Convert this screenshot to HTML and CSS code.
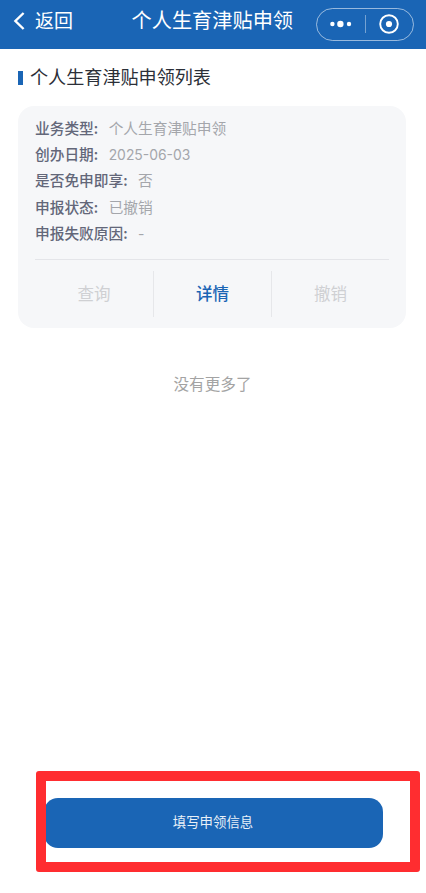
FILE: index.html
```html
<!DOCTYPE html>
<html lang="zh-CN">
<head>
<meta charset="utf-8">
<title>个人生育津贴申领</title>
<link rel="stylesheet" href="styles.css">
</head>
<body>
<div class="page">
  <header class="nav">
    <div class="nav-back">
      <svg class="chevron" viewBox="0 0 12 18" width="12" height="18"><path d="M10.6 1 L2.4 9 L10.6 17" fill="none" stroke="#fff" stroke-width="2.4"/></svg>
      <span>返回</span>
    </div>
    <div class="nav-title">个人生育津贴申领</div>
    <div class="capsule">
      <svg class="dots" viewBox="0 0 22 10" width="22" height="10"><circle cx="2.4" cy="5" r="2.2" fill="#fff"/><circle cx="10.4" cy="5" r="3.2" fill="#fff"/><circle cx="19" cy="5" r="2.2" fill="#fff"/></svg>
      <span class="capsule-sep"></span>
      <svg class="target" viewBox="0 0 20 20" width="20" height="20"><circle cx="10" cy="10" r="8.8" fill="none" stroke="#fff" stroke-width="1.9"/><circle cx="10" cy="10" r="3.1" fill="#fff"/></svg>
    </div>
  </header>

  <main class="content">
    <h1 class="section-title">个人生育津贴申领列表</h1>
    <section class="card">
      <dl class="fields">
        <div class="field"><dt>业务类型:</dt><dd>个人生育津贴申领</dd></div>
        <div class="field"><dt>创办日期:</dt><dd class="num">2025-06-03</dd></div>
        <div class="field"><dt>是否免申即享:</dt><dd>否</dd></div>
        <div class="field"><dt>申报状态:</dt><dd>已撤销</dd></div>
        <div class="field"><dt>申报失败原因:</dt><dd class="num">-</dd></div>
      </dl>
      <div class="actions">
        <div class="action disabled">查询</div>
        <div class="action primary">详情</div>
        <div class="action disabled">撤销</div>
      </div>
    </section>
    <p class="no-more">没有更多了</p>
  </main>

  <div class="footer">
    <button class="submit">填写申领信息</button>
  </div>
  <div class="annotation"></div>
</div>
</body>
</html>
```

FILE: styles.css
```css
* { box-sizing: border-box; }
html, body { margin: 0; padding: 0; background: #fff; }
body { font-family: "Noto Sans CJK SC", "Noto Sans", sans-serif; }

.page {
  position: relative;
  width: 426px;
  height: 893px;
  display: flex;
  flex-direction: column;
  overflow: hidden;
}

.nav {
  position: relative;
  height: 49px;
  flex: none;
  background: #1a65b5;
  color: #fff;
  display: flex;
  align-items: center;
  justify-content: space-between;
  padding: 0 12px 8px 13px;
}
.nav-back {
  display: flex;
  align-items: center;
  gap: 10px;
  font-size: 19px;
  line-height: 26px;
}
.nav-back span { margin-top: -2px; }
.chevron { display: block; }
.nav-title {
  position: absolute;
  left: 131.5px;
  top: 5px;
  font-size: 20.2px;
  line-height: 29px;
  white-space: nowrap;
}
.capsule {
  width: 98px;
  height: 33px;
  margin-top: 7px;
  border: 1px solid rgba(255,255,255,.55);
  border-radius: 17px;
  display: flex;
  align-items: center;
  gap: 13px;
  padding: 0 0 0 13px;
}
.capsule-sep {
  width: 1px;
  height: 18px;
  background: rgba(255,255,255,.4);
}

.content {
  flex: 1;
  padding: 0 20px 0 18px;
  display: flex;
  flex-direction: column;
}
.section-title {
  margin: 15px 0 17px;
  padding-left: 12px;
  position: relative;
  font-size: 18.1px;
  line-height: 25px;
  font-weight: 400;
  color: #2b2f38;
}
.section-title::before {
  content: "";
  position: absolute;
  left: 0;
  top: 7px;
  width: 5px;
  height: 14px;
  background: #1a65b5;
}

.card {
  height: 222px;
  background: #f6f7f9;
  border-radius: 16px;
  padding: 9px 17px 0;
  display: flex;
  flex-direction: column;
}
.fields { margin: 0; height: 145px; border-bottom: 1px solid #e4e5e9; }
.field {
  display: flex;
  height: 26.2px;
  align-items: baseline;
  font-size: 14.7px;
  line-height: 26.2px;
  white-space: nowrap;
}
.field dt { color: #636779; font-weight: 500; padding-right: 10.5px; }
.field dd { margin: 0; color: #a4a6ab; }
.field .num { font-family: Inter, "Noto Sans", sans-serif; font-size: 13.9px; }

.actions {
  margin-top: 11px;
  height: 46px;
  display: grid;
  grid-template-columns: 118px 118px 1fr;
}
.action {
  display: flex;
  align-items: center;
  justify-content: center;
  font-size: 16.5px;
  line-height: 20px;
  padding-bottom: 2px;
}
.action + .action { border-left: 1px solid #e6e7ea; }
.disabled { color: #cfd0d3; }
.primary { color: #1a65b5; font-weight: 500; }

.no-more {
  margin: 43px 0 0;
  text-align: center;
  font-size: 15.6px;
  line-height: 24px;
  color: #a3a3a3;
  padding-left: 1px;
}

.footer {
  flex: none;
  padding: 0 43px 45px 44px;
}
.submit {
  display: block;
  width: 339px;
  height: 50px;
  border: 0;
  padding: 0 1px 4px 0;
  border-radius: 14px;
  background: #1a65b5;
  color: #e8f0f8;
  font-family: inherit;
  font-size: 13.4px;
}

.annotation {
  position: absolute;
  left: 36px;
  top: 771px;
  width: 384px;
  height: 101px;
  border: 10px solid #ff2d30;
  border-radius: 3px;
}
```
